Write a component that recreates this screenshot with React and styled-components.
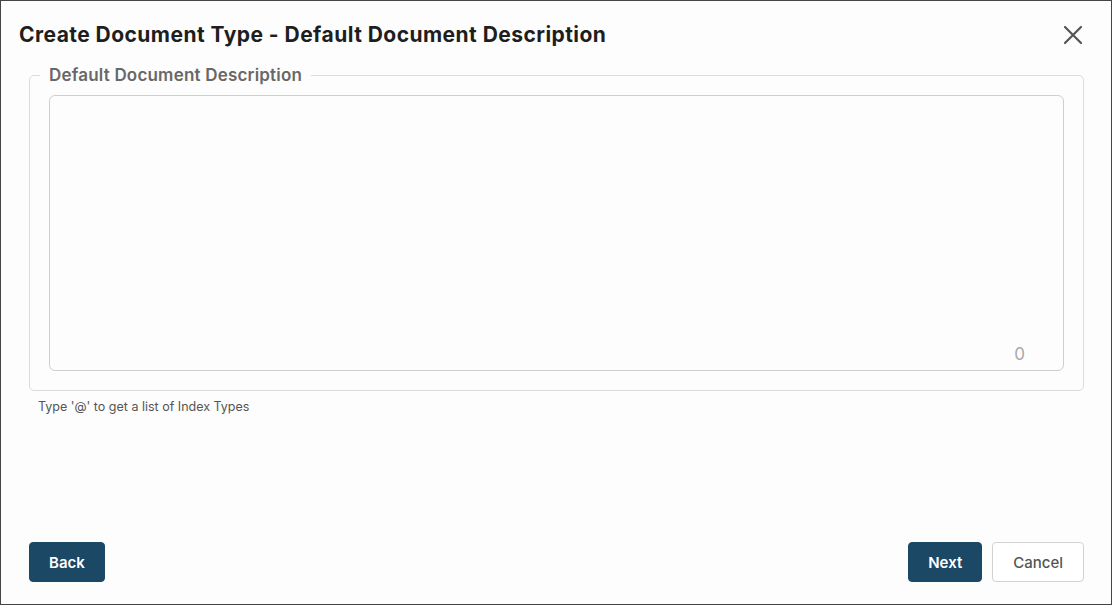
import React from "react"
import styled, { createGlobalStyle } from "styled-components"

const GlobalStyle = createGlobalStyle`
  html, body {
    margin: 0;
    padding: 0;
    background: #ffffff;
  }
  body {
    font-family: Inter, "Liberation Sans", sans-serif;
  }
`

const Dialog = styled.div`
  box-sizing: border-box;
  width: 1112px;
  height: 605px;
  border: 1px solid #454545;
  background: #fdfdfd;
  display: flex;
  flex-direction: column;
  padding: 0 27px 22px 28px;
`

const Header = styled.div`
  display: flex;
  align-items: center;
  justify-content: space-between;
  height: 67px;
`

const Title = styled.h2`
  margin: 0 0 0 -10px;
  font-size: 21px;
  font-weight: 700;
  color: #1e1e1e;
  letter-spacing: 0.45px;
`

const CloseButton = styled.button`
  border: none;
  background: none;
  padding: 0;
  margin-right: -3px;
  width: 28px;
  height: 28px;
  display: flex;
  align-items: center;
  justify-content: center;
  color: #555;
  cursor: pointer;
`

const Fieldset = styled.fieldset`
  margin: -3px 0 0 0;
  padding: 10px 19px 19px 19px;
  border: 1px solid #dcdcdc;
  border-radius: 5px;
`

const Legend = styled.legend`
  padding: 0 9px;
  margin-left: -9px;
  font-size: 17px;
  font-weight: 600;
  color: #686868;
  letter-spacing: 0.2px;
`

const TextArea = styled.div`
  position: relative;
  height: 274px;
  border: 1px solid #cfcfcf;
  border-radius: 6px;
  background: #fdfdfd;
`

const Counter = styled.span`
  position: absolute;
  right: 38px;
  bottom: 6px;
  font-size: 17px;
  color: #a8a8a8;
`

const Helper = styled.div`
  margin: 8px 0 0 9px;
  font-size: 12.5px;
  color: #555;
`

const Footer = styled.div`
  margin-top: auto;
  display: flex;
  align-items: center;
  gap: 10px;
`

const Spacer = styled.div`
  flex: 1;
`

const Button = styled.button`
  height: 40px;
  padding: 0 ${(p) => (p.$primary ? "19px" : "20px")};
  border-radius: 4px;
  font-family: inherit;
  font-size: 15px;
  font-weight: ${(p) => (p.$primary ? 600 : 500)};
  border: 1px solid ${(p) => (p.$primary ? "#1a4865" : "#d2d2d2")};
  background: ${(p) => (p.$primary ? "#1a4865" : "#ffffff")};
  color: ${(p) => (p.$primary ? "#ffffff" : "#555")};
  cursor: pointer;
`

export default function App() {
  return (
    <>
      <GlobalStyle />
      <Dialog>
        <Header>
          <Title>Create Document Type - Default Document Description</Title>
          <CloseButton aria-label="Close">
            <svg width="20" height="20" viewBox="0 0 20 20" fill="none">
              <path d="M2 2 L18 18 M18 2 L2 18" stroke="currentColor" strokeWidth="2.2" strokeLinecap="round" />
            </svg>
          </CloseButton>
        </Header>
        <Fieldset>
          <Legend>Default Document Description</Legend>
          <TextArea>
            <Counter>0</Counter>
          </TextArea>
        </Fieldset>
        <Helper>Type '@' to get a list of Index Types</Helper>
        <Footer>
          <Button $primary>Back</Button>
          <Spacer />
          <Button $primary>Next</Button>
          <Button>Cancel</Button>
        </Footer>
      </Dialog>
    </>
  )
}
